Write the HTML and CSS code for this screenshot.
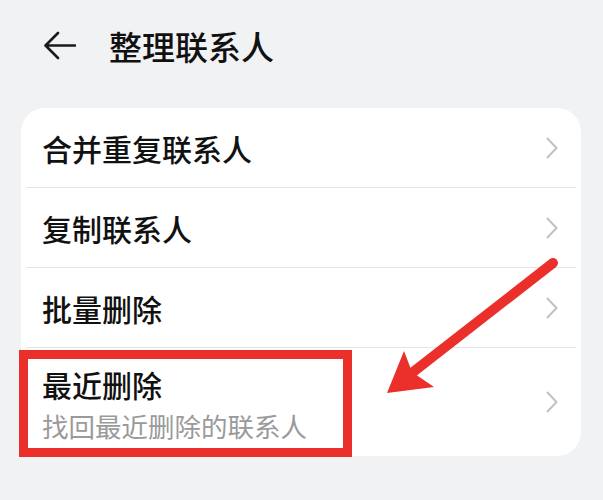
FILE: index.html
```html
<!DOCTYPE html>
<html lang="zh-CN">
<head>
  <meta charset="UTF-8">
  <title>整理联系人</title>
  <link rel="stylesheet" href="styles.css">
</head>
<body>
<div class="page">
  <header class="header">
    <svg class="header__back" viewBox="0 0 33 30" xmlns="http://www.w3.org/2000/svg">
      <path d="M32 14.5H3M15 2L2.5 14.5L15 27" fill="none" stroke="#1a1a1a" stroke-width="2.6" stroke-linecap="round" stroke-linejoin="round"/>
    </svg>
    <h1 class="header__title">整理联系人</h1>
  </header>

  <div class="card">
    <div class="row">
      <span class="row__title">合并重复联系人</span>
      <svg class="row__chevron" viewBox="0 0 12 22" xmlns="http://www.w3.org/2000/svg"><path d="M1.5 1.5L10.5 11L1.5 20.5" fill="none" stroke="#c2c2c2" stroke-width="2" stroke-linecap="round" stroke-linejoin="round"/></svg>
    </div>
    <div class="row">
      <span class="row__title">复制联系人</span>
      <svg class="row__chevron" viewBox="0 0 12 22" xmlns="http://www.w3.org/2000/svg"><path d="M1.5 1.5L10.5 11L1.5 20.5" fill="none" stroke="#c2c2c2" stroke-width="2" stroke-linecap="round" stroke-linejoin="round"/></svg>
    </div>
    <div class="row">
      <span class="row__title">批量删除</span>
      <svg class="row__chevron" viewBox="0 0 12 22" xmlns="http://www.w3.org/2000/svg"><path d="M1.5 1.5L10.5 11L1.5 20.5" fill="none" stroke="#c2c2c2" stroke-width="2" stroke-linecap="round" stroke-linejoin="round"/></svg>
    </div>
    <div class="row row--double">
      <div class="row__text">
        <span class="row__title">最近删除</span>
        <span class="row__sub">找回最近删除的联系人</span>
      </div>
      <svg class="row__chevron" viewBox="0 0 12 22" xmlns="http://www.w3.org/2000/svg"><path d="M1.5 1.5L10.5 11L1.5 20.5" fill="none" stroke="#c2c2c2" stroke-width="2" stroke-linecap="round" stroke-linejoin="round"/></svg>
    </div>
  </div>

  <!-- annotation drawn over the screenshot -->
  <svg class="mark" viewBox="0 0 603 500" xmlns="http://www.w3.org/2000/svg">
    <rect x="23.5" y="354.5" width="324" height="98" fill="none" stroke="#eb2f2a" stroke-width="9"/>
    <line x1="553" y1="263" x2="408" y2="376" stroke="#eb2f2a" stroke-width="10" stroke-linecap="round"/>
    <polygon points="387,393 404,351 412,372 434,387" fill="#eb2f2a"/>
  </svg>
</div>
</body>
</html>
```

FILE: styles.css
```css
* {
  margin: 0;
  padding: 0;
  box-sizing: border-box;
}

:root {
  --color-bg: #f1f2f4;
  --color-text: #111111;
  --color-sub: #9a9a9a;
  --color-line: #e4e4e4;
}

body {
  background-color: var(--color-bg);
  font-family: "Noto Sans CJK SC", "Noto Sans", sans-serif;
  color: var(--color-text);
}

.page {
  position: relative;
  width: 603px;
  height: 500px;
  overflow: hidden;
}

.header {
  height: 92px;
  display: flex;
  align-items: center;
  padding-left: 43px;
  gap: 33px;
}

.header__back {
  width: 33px;
  height: 30px;
}

.header__title {
  font-size: 33px;
  font-weight: 500;
  line-height: 1;
}

.card {
  margin: 16px 22px 0 21px;
  background-color: #fff;
  border-radius: 24px;
  overflow: hidden;
}

.row {
  height: 80px;
  margin: 0 5px;
  padding: 0 18px 0 16px;
  display: flex;
  align-items: center;
  justify-content: space-between;
  border-bottom: 1px solid var(--color-line);
}

.row:last-child {
  border-bottom: none;
}

.row__title {
  font-size: 30px;
  font-weight: 500;
  line-height: 40px;
}

.row__chevron {
  width: 12px;
  height: 22px;
}

.row--double {
  height: 108px;
  padding-top: 16px;
  padding-bottom: 8px;
}

.row--double .row__chevron {
  margin-bottom: 8px;
}

.row__text {
  display: flex;
  flex-direction: column;
}

.row__sub {
  font-size: 26.5px;
  line-height: 44px;
  color: var(--color-sub);
}

.mark {
  position: absolute;
  top: 0;
  left: 0;
  width: 603px;
  height: 500px;
  pointer-events: none;
}
```
